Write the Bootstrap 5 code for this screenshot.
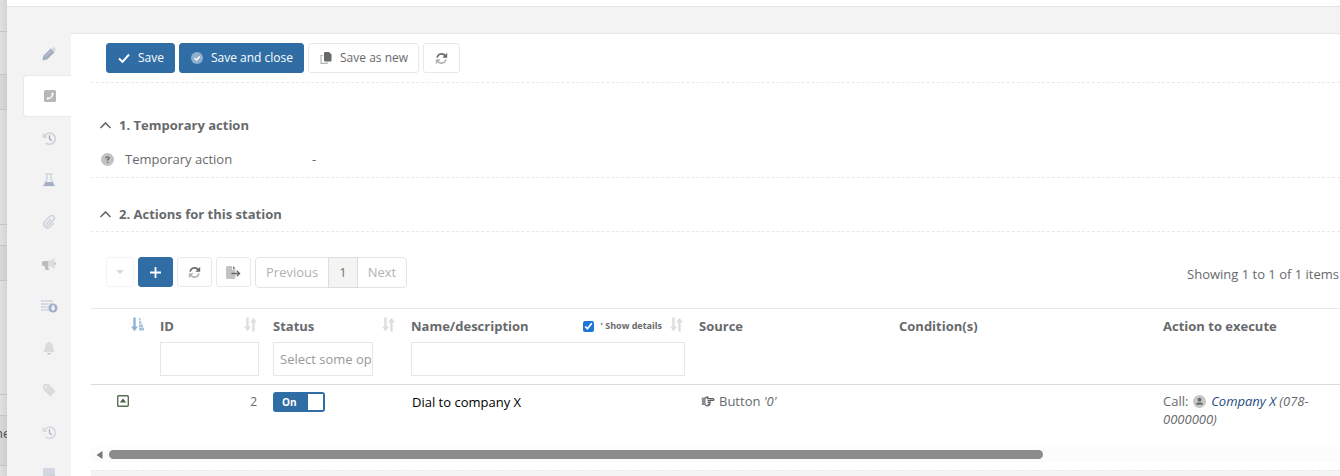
<!DOCTYPE html>
<html lang="en">
<head>
<meta charset="utf-8">
<meta name="viewport" content="width=device-width, initial-scale=1">
<title>Station actions</title>
<link href="https://cdn.jsdelivr.net/npm/bootstrap@5.3.0/dist/css/bootstrap.min.css" rel="stylesheet">
<style>
:root{--tx:#676a6c;--pri:#306da5;--line:#e7eaec}
body{font-family:"Open Sans","Liberation Sans",sans-serif;font-size:13px;line-height:18px;color:var(--tx);background:#f3f3f3}
svg{display:block;flex:none}
.shell{height:100vh}
/* dimmed page visible behind the panel */
.behind{width:7px;flex:none;background:linear-gradient(90deg,#e0e0e0,#d4d4d4)}
.behind div{border-bottom:1px solid #c3c3c3}
.behind .shade{background:#00000008}
.behind span{display:block;margin-left:-5px;color:#4c4c4c;white-space:nowrap}
.topstrip{height:7px;border-bottom:1px solid #e3e3e3}
.sidetabs{width:48px;margin:26px 0 0 16px;flex:none}
.sidetab{height:42px;width:48px;padding-left:4px;color:#a9b2c4}
.sidetab.on{background:#fff;border:1px solid var(--line);border-right:0;border-radius:4px 0 0 4px;color:#b8b8b8}
.panel{margin-top:26px;border-top:1px solid #e4e6e7;padding:9px 0 0 20px}
.dash{border-bottom:1px dashed var(--line)}
.bar{gap:4px;padding:0 0 9px 15px}
.tbtn{height:30px;padding:0 10px 0 11px;font-size:12px;line-height:18px;border-radius:3px;border:1px solid var(--line);background:#fff;color:var(--tx);display:flex;align-items:center;gap:8px}
.tbtn.pri{background:var(--pri);border-color:var(--pri);color:#fff}
.tbtn.sq{width:35px;padding:0;justify-content:center}
.bar .tbtn.sq{width:37px}
.tbtn.faded{width:28px;opacity:.55}
h2{font-size:13px;line-height:18px;font-weight:700;margin:0}
.pager .page-link{height:31px;padding:5px 10px;font-size:13px;line-height:18px;color:#b0b2b3;border-color:#e3e3e3}
.pager .page-item.active .page-link{background:#f4f4f4;color:#84715a;border-color:#ddd}
.pager .page-link.prev{border-radius:4px 0 0 4px}
.pager .page-link.next{border-radius:0 4px 4px 0}
.grid{table-layout:fixed;margin:0;color:var(--tx);--bs-table-bg:transparent;border-top:1px solid var(--line)}
.grid th,.grid td{padding:8px 8px 8px 6px;border:0;color:var(--tx);vertical-align:top}
.grid td{padding-top:7px}
.grid thead tr{border-bottom:1px solid #dcdcdc}
.grid thead th{height:75px}
.box{height:34px;width:100%;border:1px solid #e5e6e7;border-radius:0;padding:6px;font-size:13px;line-height:18px;color:var(--tx)}
.box::placeholder{color:#999;opacity:1}
.box.pick{width:100px;padding-right:1px}
.hd{height:18px;margin-bottom:7px}
.hd svg{margin-right:2px}
.tiny{font-size:9px;line-height:18px}
.tiny input{width:11px;height:11px;accent-color:#1f75d8}
.toggle{width:52px;height:20px;background:var(--pri);border:2px solid var(--pri);border-radius:3px;padding:0;color:#fff;font-size:10px;line-height:16px;font-weight:700}
.toggle i{width:15px;height:16px;background:#fff}
.dial{color:#000}
.dest{color:#1d4b82;text-decoration:none}
.hbar{height:15px;background:#fcfcfc;padding:0 0 0 5px}
.thumb{height:9px;border-radius:5px;background:#8b8b8b}
.foot{background:#f4f4f4;border-top:1px dashed var(--line);min-height:60px}
</style>
</head>
<body class="overflow-hidden">
<svg width="0" height="0" class="position-absolute">
<symbol id="sync" viewBox="0 0 16 16"><path d="M2.6 7A5.6 5.6 0 0 1 12.6 4.6" fill="none" stroke="currentColor" stroke-width="2"/><path d="M15 1v6H9z" fill="currentColor"/><g opacity=".5"><path d="M13.4 9A5.6 5.6 0 0 1 3.4 11.4" fill="none" stroke="currentColor" stroke-width="2"/><path d="M1 15V9h6z" fill="currentColor"/></g></symbol>
<symbol id="history" viewBox="0 0 16 16"><path d="M3.200 4.800A6 6 0 1 1 4 12.600" fill="none" stroke="currentColor" stroke-width="1.900" opacity=".45"/><path d="M.8 2.200v5h5z" fill="currentColor" opacity=".5"/><path d="M8 4.600v3.800l2.300 2" fill="none" stroke="#9aa4b6" stroke-width="1.400"/></symbol>
<symbol id="sort" viewBox="0 0 13 14"><path d="M3.500 0v10M9.500 14V4" stroke="currentColor" stroke-width="2.400" fill="none"/><path d="M0 9h7L3.500 13.800zM6 5h7L9.500.200z" fill="currentColor"/></symbol>
<symbol id="up" viewBox="0 0 12 8"><path d="M1 7l5-5 5 5" fill="none" stroke="currentColor" stroke-width="1.600"/></symbol>
</svg>
<div class="shell d-flex overflow-hidden">
  <aside class="behind overflow-hidden" aria-hidden="true">
    <div style="height:32px"></div><div style="height:43px"></div><div class="shade" style="height:35px"></div><div style="height:115px"></div><div style="height:21px"></div><div class="shade" style="height:35px"></div><div style="height:114px"></div><div style="height:21px"></div><div class="shade pt-2" style="height:50px"><span>ne</span></div>
  </aside>
  <main class="flex-grow-1 d-flex flex-column overflow-hidden">
    <div class="topstrip bg-white flex-shrink-0"></div>
    <div class="d-flex flex-grow-1 overflow-hidden">
      <nav class="sidetabs" aria-label="Sections">
        <a href="#" aria-label="Edit" class="sidetab d-flex align-items-center justify-content-center"><svg width="14" height="14" viewBox="0 0 16 16"><path d="M.5 15.500l1-5.500L10 1.800l4.200 4.200-8.200 8.300z" fill="#a2aec3"/><path d="M10.800 1.700l1-1a1.600 1.600 0 0 1 2.300 0l1.200 1.200a1.600 1.600 0 0 1 0 2.300l-1 1z" fill="#d5dae1"/><path d="M4 11l6.500-6.500" stroke="#c5cbd6"/></svg></a>
        <a href="#" aria-label="Actions" class="sidetab on d-flex align-items-center justify-content-center"><svg width="12" height="12" viewBox="0 0 12 12"><rect width="12" height="12" rx="1.500" fill="#b7b7b7"/><path d="M8 2.500l1.500.4c.2 3.500-3 6.700-6.500 6.500l-.4-1.600 1.600-.7.900.9A5 5 0 0 0 8 5.100l-.8-.8z" fill="#fff"/></svg></a>
        <a href="#" aria-label="History" class="sidetab d-flex align-items-center justify-content-center"><svg width="15" height="15"><use href="#history"/></svg></a>
        <a href="#" aria-label="Lab" class="sidetab d-flex align-items-center justify-content-center"><svg width="14" height="14" viewBox="0 0 14 14"><path d="M3.500 1h7M5 1.500v4.500L1.800 12.500h10.400L9 6V1.500" fill="none" stroke="#cfd5de" stroke-width="1.500"/><path d="M3.700 9h6.600l2.200 4h-11z" fill="#a4afc4"/></svg></a>
        <a href="#" aria-label="Attachments" class="sidetab d-flex align-items-center justify-content-center"><svg width="14" height="14" viewBox="0 0 16 16"><path d="M10.500 4.500L5.300 9.800a1.400 1.400 0 0 0 2 2l6-6.100a3 3 0 0 0-4.300-4.200L3 7.500a4.400 4.400 0 0 0 6.200 6.200l4.300-4.300" fill="none" stroke="#cdd2dc" stroke-width="1.800"/></svg></a>
        <a href="#" aria-label="Announcements" class="sidetab d-flex align-items-center justify-content-center"><svg width="14" height="14" viewBox="0 0 14 14"><path d="M1.500 4H6v5l1 4H3.500l-1-4h-1Q0 9 0 7.500v-2Q0 4 1.500 4z" fill="#bcbcbc"/><path d="M6 4q3.500 0 6.500-3v11Q9.500 9 6 9z" fill="#dcdcdc"/><path d="M12.500 5q1.500 0 1.500 1.500T12.500 8z" fill="#bcbcbc"/></svg></a>
        <a href="#" aria-label="Firewall" class="sidetab d-flex align-items-center justify-content-center"><svg width="17" height="14" viewBox="0 0 17 14"><path d="M0 1h12v11H0z" fill="#d5dae3"/><path d="M0 3.500h12M0 6.500h12M0 9.500h12" stroke="#f3f3f3"/><path d="M4 1v2.500M8 3.500v3M5.500 6.500v3M3 9.500V12" stroke="#f3f3f3" stroke-width=".7"/><circle cx="12" cy="9" r="4.500" fill="#a2b0c8"/><path d="M12 5.500q2.800 3.500 1.500 5.200-1.500 1.400-3 0Q9.500 9 12 5.500z" fill="#f0f3f7"/></svg></a>
        <a href="#" aria-label="Alerts" class="sidetab d-flex align-items-center justify-content-center"><svg width="14" height="14" viewBox="0 0 14 14"><path d="M7 .500q1 0 1 1.200 3 .8 3 4.300 0 3 2 5H1q2-2 2-5 0-3.500 3-4.300Q6 .500 7 .500z" fill="#d9dadb"/><path d="M5 12h4q-.5 1.600-2 1.600T5 12z" fill="#b9c0cc"/></svg></a>
        <a href="#" aria-label="Tags" class="sidetab d-flex align-items-center justify-content-center"><svg width="14" height="14" viewBox="0 0 14 14"><path d="M1 2.500Q1 1 2.500 1h4L13 7.500q.6.700 0 1.400L9 13q-.7.600-1.400 0L1 6.500z" fill="#dbdbdb"/><circle cx="4" cy="4" r="1" fill="#f3f3f3"/></svg></a>
        <a href="#" aria-label="Log" class="sidetab d-flex align-items-center justify-content-center"><svg width="15" height="15" opacity=".8"><use href="#history"/></svg></a>
        <a href="#" aria-label="Notes" class="sidetab d-flex align-items-center justify-content-center"><svg width="12" height="12" viewBox="0 0 12 12"><rect width="12" height="12" rx="1" fill="#d3d7e0"/><path d="M7 8h5" stroke="#bfc5d2"/></svg></a>
      </nav>
      <section class="panel bg-white flex-grow-1 overflow-hidden">
        <div class="d-flex dash bar">
          <button type="button" class="tbtn pri"><svg width="12" height="12" viewBox="0 0 12 12"><path d="M1 6.500l3.500 3.300L11 2.500" fill="none" stroke="#fff" stroke-width="1.900"/></svg>Save</button>
          <button type="button" class="tbtn pri"><svg width="12" height="12" viewBox="0 0 12 12"><circle cx="6" cy="6" r="6" fill="#8fb0cf"/><path d="M3.500 6.200l2 1.800 3.200-3.600" fill="none" stroke="#fff" stroke-width="1.500"/></svg>Save and close</button>
          <button type="button" class="tbtn"><svg width="12" height="12" viewBox="0 0 12 12"><path d="M3 3.500H1V11.300h6V10" fill="none" stroke="#b5b6b7" stroke-width="1.200"/><path d="M5 0h4l2.500 2.500V8.500q0 1-1 1H5q-1 0-1-1V1q0-1 1-1z" fill="#676a6c"/></svg>Save as new</button>
          <button type="button" class="tbtn sq" aria-label="Refresh"><svg width="13" height="13"><use href="#sync"/></svg></button>
        </div>
        <div class="d-flex align-items-center ps-2" style="gap:7px;padding-top:33px"><svg width="13" height="8"><use href="#up"/></svg><h2>1. Temporary action</h2></div>
        <div class="d-flex align-items-center dash" style="margin-top:16px;padding:0 0 9px 10px">
          <svg width="13" height="13" viewBox="0 0 13 13"><circle cx="6.500" cy="6.500" r="6.500" fill="#c2c2c3"/><path d="M4.800 5.200Q4.900 3.800 6.500 3.800T8.200 5.100Q8.200 6 6.600 6.700V7.600M6.600 8.600v1.200" fill="none" stroke="#676a6c" stroke-width="1.300"/></svg>
          <span style="margin-left:11px;width:187px">Temporary action</span><span>-</span>
        </div>
        <div class="d-flex align-items-center ps-2 dash" style="padding-top:27px;padding-bottom:8px;gap:7px"><svg width="13" height="8"><use href="#up"/></svg><h2>2. Actions for this station</h2></div>
        <div class="d-flex justify-content-between" style="padding:25px 1px 20px 15px">
          <div class="d-flex align-items-start gap-1">
            <button type="button" class="tbtn sq faded" aria-label="Menu"><svg width="8" height="4" viewBox="0 0 8 4"><path d="M0 0h8L4 4z" fill="#bbb"/></svg></button>
            <button type="button" class="tbtn sq pri" aria-label="Add"><svg width="11" height="11" viewBox="0 0 11 11"><path d="M5.500 0v11M0 5.500h11" stroke="#fff" stroke-width="1.800"/></svg></button>
            <button type="button" class="tbtn sq" aria-label="Reload"><svg width="13" height="13"><use href="#sync"/></svg></button>
            <button type="button" class="tbtn sq" aria-label="Export"><svg width="15" height="13" viewBox="0 0 15 13"><path d="M1.500 0H6v3.500h3.500v8q0 1.500-1.500 1.500H1.500Q0 13 0 11.500v-10Q0 0 1.500 0z" fill="#c2c3c4"/><path d="M7 0l2.500 2.800H7z" fill="#676a6c"/><path d="M5.500 7.500H13M10.800 4.800l2.800 2.700-2.800 2.700" fill="none" stroke="#676a6c" stroke-width="1.300"/></svg></button>
            <ul class="pagination pager m-0">
              <li class="page-item"><a class="page-link prev" href="#">Previous</a></li>
              <li class="page-item active"><a class="page-link" href="#">1</a></li>
              <li class="page-item"><a class="page-link next" href="#">Next</a></li>
            </ul>
          </div>
          <div class="pt-2">Showing 1 to 1 of 1 items</div>
        </div>
        <table class="table grid">
          <colgroup><col style="width:63px"><col style="width:113px"><col style="width:138px"><col style="width:288px"><col style="width:200px"><col style="width:264px"><col></colgroup>
          <thead><tr>
            <th aria-label="Order"><div class="hd"><svg class="ms-auto" width="13" height="15" viewBox="0 0 13 14"><path d="M3.500 0v10" stroke="#8fb3d6" stroke-width="2.400"/><path d="M0 9h7L3.500 13.800z" fill="#8fb3d6"/><path d="M8 1.700h1.500M8 5h2.500M8 8.300h4M8 11.600h5" stroke="#a8c3df" stroke-width="2.700"/></svg></div></th>
            <th><div class="hd d-flex justify-content-between"><label for="fid">ID</label><svg width="13" height="15" color="#dedede"><use href="#sort"/></svg></div><input id="fid" class="box" type="text"></th>
            <th><div class="hd d-flex justify-content-between"><label for="fst">Status</label><svg width="13" height="15" color="#dedede"><use href="#sort"/></svg></div><input id="fst" class="box pick" type="text" placeholder="Select some options"></th>
            <th><div class="hd d-flex"><label for="fnm" class="me-auto">Name/description</label><span class="tiny d-flex align-items-center" style="gap:6px"><input type="checkbox" id="det" checked><label for="det">' Show details</label></span><svg class="ms-2" width="13" height="15" color="#dedede"><use href="#sort"/></svg></div><input id="fnm" class="box" type="text"></th>
            <th>Source</th><th>Condition(s)</th><th>Action to execute</th>
          </tr></thead>
          <tbody><tr>
            <td><svg style="margin:3px 0 0 20px" width="12" height="12" viewBox="0 0 12 12"><rect x=".7" y=".7" width="10.600" height="10.600" rx="1" fill="none" stroke="#55704f" stroke-width="1.400"/><path d="M6 3.500l3.200 4H2.800z" fill="#4b5a4b"/></svg></td>
            <td class="text-end"><span style="font-size:12px;margin-right:2px">2</span></td>
            <td><button type="button" class="toggle d-flex justify-content-between" role="switch" aria-checked="true"><span style="padding-left:7px">On</span><i></i></button></td>
            <td style="padding:8px 8px 8px 7px"><span class="dial">Dial to company X</span></td>
            <td><span class="d-flex align-items-center" style="gap:4px;margin-left:2px"><svg width="14" height="11" viewBox="0 0 14 12"><path d="M1 2.500h2.500L6 1q1-.3 1 .8l-.5 1h6q1 0 1 1t-1 1H8.500M3.500 9q1 1.800 3 1.800 2 0 2.200-1.500.8-.8.300-1.700.8-.9.200-1.700M9 5H6.500M8.800 7H6.500M8.500 9.200H6.500M3.500 2.500V9H1Z" fill="none" stroke="#5d6062" stroke-width="1.300"/><path d="M0 2h3.500v7.500H1Q0 6 0 2z" fill="#8c8e90"/></svg><span>Button <em>'0'</em></span></span></td>
            <td></td>
            <td>Call: <svg class="d-inline-block" style="margin:0 2px 2px 1px" width="13" height="13" viewBox="0 0 13 13"><circle cx="6.500" cy="6.500" r="6.500" fill="#c6c6c6"/><circle cx="6.500" cy="4.700" r="1.900" fill="#676a6c"/><path d="M3 9.800q0-2.300 2.300-2.300h2.400q2.300 0 2.300 2.300z" fill="#676a6c"/></svg> <em><a class="dest" href="#">Company X</a> (078-0000000)</em></td>
          </tr></tbody>
        </table>
        <div class="hbar d-flex align-items-center" style="margin-top:11px"><svg width="7" height="8" viewBox="0 0 7 8"><path d="M6.500 0v8L.5 4z" fill="#777"/></svg><div class="flex-grow-1" style="padding-left:6px"><div class="thumb" style="width:75.9%"></div></div></div>
        <div class="foot" style="margin-top:8px"></div>
      </section>
    </div>
  </main>
</div>
<script src="https://cdn.jsdelivr.net/npm/bootstrap@5.3.0/dist/js/bootstrap.bundle.min.js"></script>
</body>
</html>
